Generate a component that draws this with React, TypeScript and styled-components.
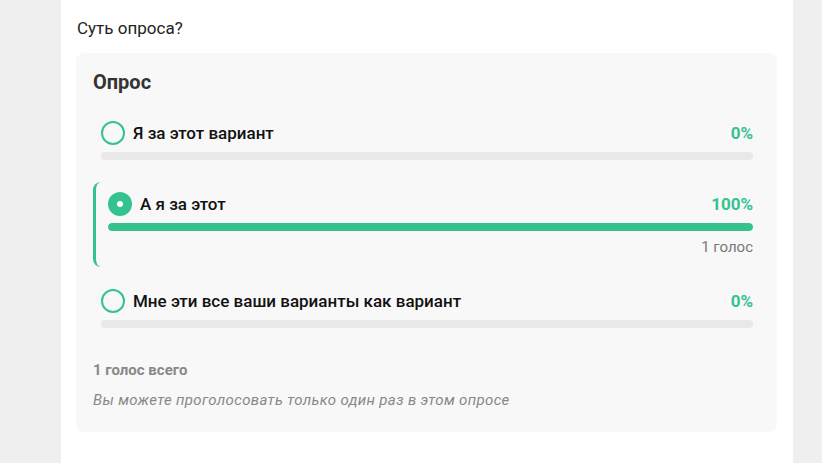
import React from "react";
import styled, { createGlobalStyle } from "styled-components";

const Global = createGlobalStyle`
  html, body { margin: 0; padding: 0; background: #efefef; }
  body { font-family: Roboto, "Noto Sans", Arial, sans-serif; }
`;

const Page = styled.div`
  display: flex;
  justify-content: flex-start;
  padding-left: 61px;
  min-height: 463px;
`;

const Column = styled.main`
  width: 732px;
  background: #fff;
  padding: 16px 16px 31px 15px;
  box-sizing: border-box;
  min-height: 463px;
`;

const Question = styled.p`
  margin: 0 0 13px 1px;
  font-size: 17px;
  line-height: 24px;
  color: #222;
`;

const Card = styled.section`
  background: #f8f8f8;
  border-radius: 8px;
  padding: 16px 16px 22px 17px;
`;

const Title = styled.h3`
  margin: 0 0 16px 0;
  font-size: 20px;
  line-height: 26px;
  font-weight: 700;
  color: #333;
`;

const Options = styled.div`
  display: flex;
  flex-direction: column;
  gap: 12px;
`;

const Option = styled.div<{ $selected?: boolean }>`
  display: flex;
  flex-direction: column;
  padding: 10px 8px 10px ${(p) => (p.$selected ? "12px" : "8px")};
  border-left: ${(p) => (p.$selected ? "3px solid #34c38f" : "0")};
  border-radius: 8px;
`;

const Row = styled.div`
  display: flex;
  align-items: center;
  height: 24px;
`;

const Radio = styled.span<{ $checked?: boolean }>`
  width: 24px;
  height: 24px;
  box-sizing: border-box;
  border-radius: 50%;
  border: 2px solid #34c38f;
  background: ${(p) => (p.$checked ? "#34c38f" : "transparent")};
  display: flex;
  align-items: center;
  justify-content: center;
  flex-shrink: 0;
  &::after {
    content: "";
    display: ${(p) => (p.$checked ? "block" : "none")};
    width: 6px;
    height: 6px;
    border-radius: 50%;
    background: #fff;
  }
`;

const Label = styled.span`
  margin-left: 8px;
  font-size: 17px;
  font-weight: 500;
  color: #111;
  flex: 1;
`;

const Percent = styled.span`
  font-size: 17px;
  font-weight: 700;
  color: #34c38f;
`;

const Track = styled.div`
  margin-top: 7px;
  height: 8px;
  border-radius: 4px;
  background: #e8e8e8;
  overflow: hidden;
`;

const Fill = styled.div`
  height: 100%;
  border-radius: 4px;
  background: #34c38f;
`;

const Votes = styled.div`
  margin-top: 6px;
  text-align: right;
  font-size: 15px;
  line-height: 20px;
  color: #777;
`;

const Total = styled.div`
  margin-top: 22px;
  font-size: 15px;
  line-height: 20px;
  font-weight: 700;
  color: #888;
`;

const Note = styled.div`
  margin-top: 10px;
  font-size: 15px;
  line-height: 20px;
  font-style: italic;
  letter-spacing: 0.35px;
  color: #888;
`;

const options = [
  { label: "Я за этот вариант", pct: 0, votes: 0, selected: false },
  { label: "А я за этот", pct: 100, votes: 1, selected: true },
  { label: "Мне эти все ваши варианты как вариант", pct: 0, votes: 0, selected: false },
];

export default function App() {
  return (
    <>
      <Global />
      <Page>
        <Column>
          <Question>Суть опроса?</Question>
          <Card>
            <Title>Опрос</Title>
            <Options>
              {options.map((o) => (
                <Option key={o.label} $selected={o.selected}>
                  <Row>
                    <Radio $checked={o.selected} />
                    <Label>{o.label}</Label>
                    <Percent>{o.pct}%</Percent>
                  </Row>
                  <Track>
                    <Fill style={{ width: `${o.pct}%` }} />
                  </Track>
                  {o.votes > 0 && <Votes>{o.votes} голос</Votes>}
                </Option>
              ))}
            </Options>
            <Total>1 голос всего</Total>
            <Note>Вы можете проголосовать только один раз в этом опросе</Note>
          </Card>
        </Column>
      </Page>
    </>
  );
}
